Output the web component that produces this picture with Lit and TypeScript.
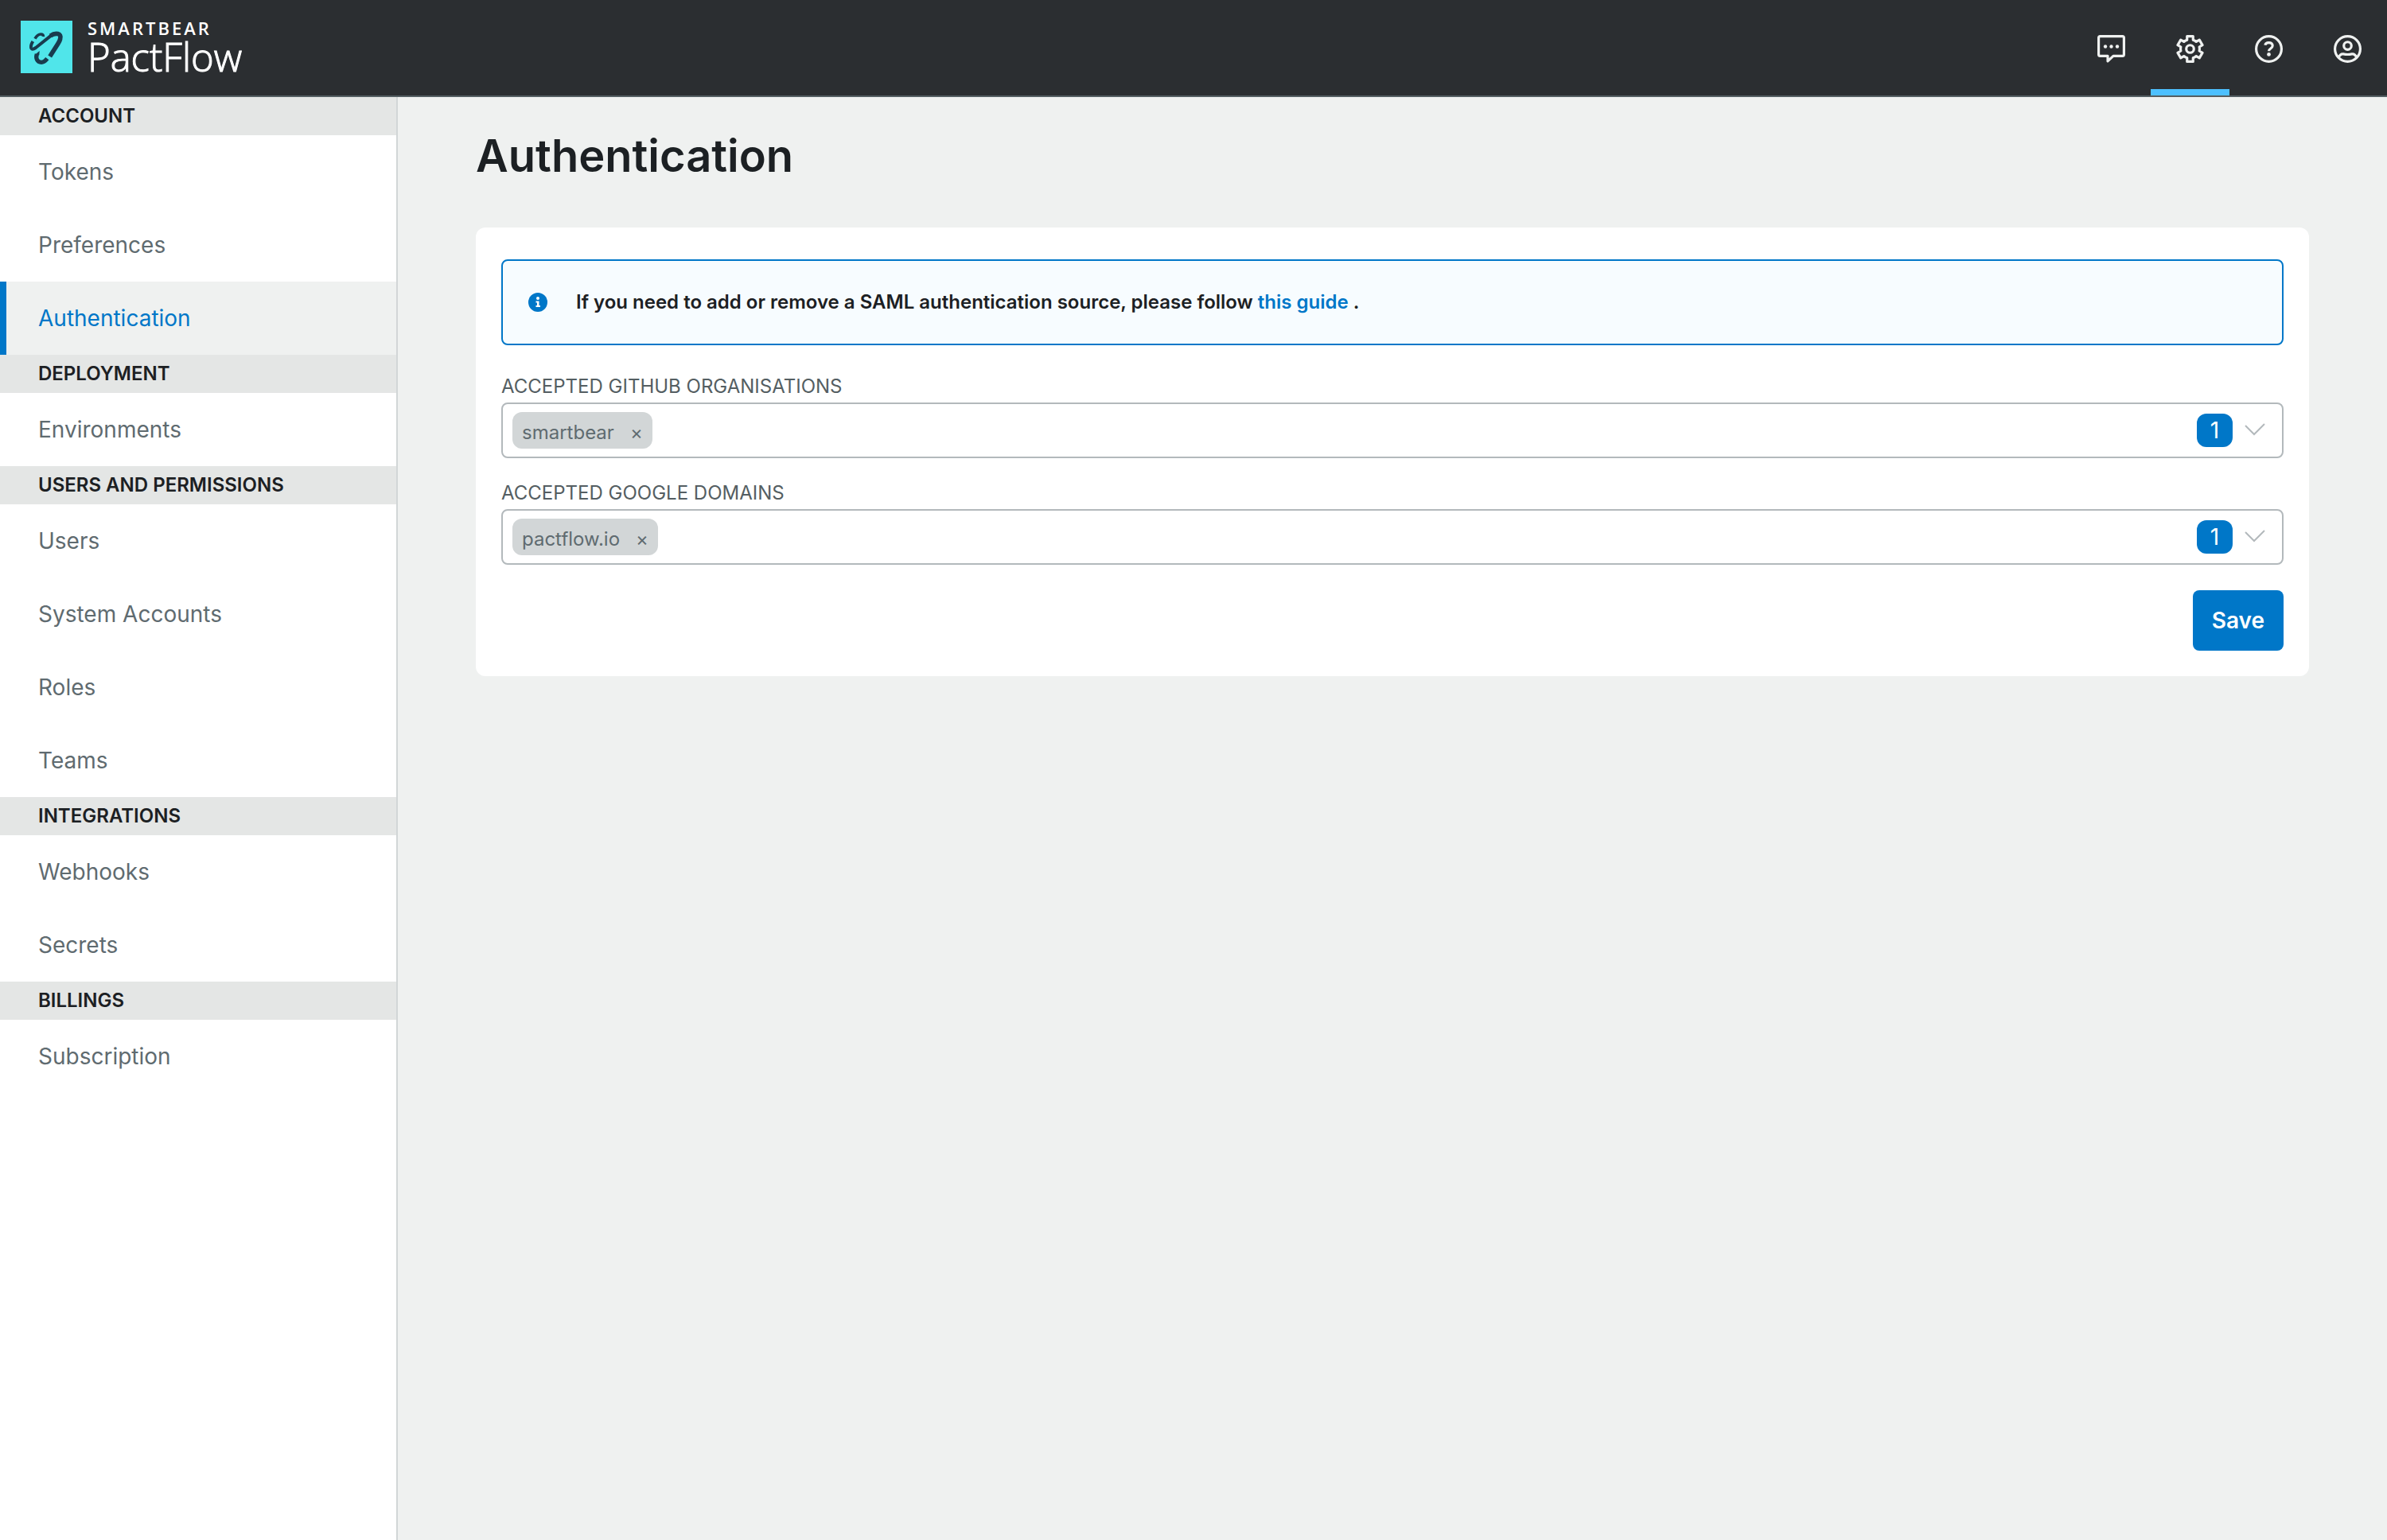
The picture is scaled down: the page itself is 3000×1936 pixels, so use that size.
import { LitElement, html, css, svg } from "lit";
import { customElement, property, state } from "lit/decorators.js";
import { classMap } from "lit/directives/class-map.js";

interface NavSection {
  title: string;
  items: string[];
}

const SECTIONS: NavSection[] = [
  { title: "Account", items: ["Tokens", "Preferences", "Authentication"] },
  { title: "Deployment", items: ["Environments"] },
  { title: "Users and permissions", items: ["Users", "System Accounts", "Roles", "Teams"] },
  { title: "Integrations", items: ["Webhooks", "Secrets"] },
  { title: "Billings", items: ["Subscription"] },
];

const ICONS = {
  feedback: svg`
    <path d="M4 2h28a2 2 0 0 1 2 2v21a2 2 0 0 1-2 2H20.500L13.500 33.500V27H4a2 2 0 0 1-2-2v-21a2 2 0 0 1 2-2z" />
    <g fill="currentColor" stroke="none">
      <circle cx="10.500" cy="15" r="2.200" /><circle cx="18" cy="15" r="2.200" /><circle cx="25.500" cy="15" r="2.200" />
    </g>`,
  settings: svg`
    <path d="M14.200 2h7.600v4.600a12 12 0 0 1 4 2.300l4-2.300 3.800 6.500-3.900 2.400a12 12 0 0 1 0 5l3.900 2.400-3.800 6.500-4-2.300a12 12 0 0 1-4 2.300V34h-7.600v-4.600a12 12 0 0 1-4-2.300l-4 2.300-3.800-6.500 3.900-2.400a12 12 0 0 1 0-5l-3.900-2.400 3.800-6.500 4 2.300a12 12 0 0 1 4-2.300z" />
    <circle cx="18" cy="18" r="4.800" />`,
  help: svg`
    <circle cx="18" cy="18" r="16" />
    <path d="M13.300 13.200q.5-3.200 4.500-3.200c3.100 0 4.900 1.500 4.900 4 0 3.700-4.700 3.200-4.700 6.800" />
    <circle cx="18" cy="25" r="2.400" fill="currentColor" stroke="none" />`,
  profile: svg`
    <circle cx="18" cy="18" r="16" />
    <circle cx="18" cy="14" r="4.800" />
    <path d="M6.500 29q2-5 6-4.600q5.500 1.300 11 0q4-.4 6 4.600" />`,
};

@customElement("top-bar")
class TopBar extends LitElement {
  static styles = css`
    :host { display: block; }
    .bar {
      display: flex;
      justify-content: space-between;
      height: 120px;
      background: #2b2e31;
      border-bottom: 2px solid #545e62;
    }
    .brand {
      display: flex;
      align-items: center;
      gap: 19px;
      padding: 0 0 2px 26px;
      color: #fff;
      text-decoration: none;
      font-family: "Open Sans", sans-serif;
    }
    .mark { width: 65px; height: 66px; display: block; }
    .names { display: flex; flex-direction: column; }
    .company { font-size: 22px; line-height: 24px; font-weight: 600; letter-spacing: 3px; }
    .product { font-size: 49px; line-height: 48px; font-weight: 300; -webkit-text-stroke: 1px #fff; }
    .actions { display: flex; }
    .action {
      display: flex;
      align-items: center;
      justify-content: center;
      width: 99px;
      padding: 11px 0 0;
      border: 0;
      border-bottom: 8px solid transparent;
      background: none;
      color: #eff1f0;
      cursor: pointer;
    }
    .current { border-bottom-color: #4dc0ff; }
    .icon {
      width: 35px;
      height: 35px;
      fill: none;
      stroke: currentColor;
      stroke-width: 3.2;
      stroke-linejoin: round;
    }
  `;

  render() {
    const actions = [
      { label: "Feedback", icon: ICONS.feedback },
      { label: "Settings", icon: ICONS.settings, current: true },
      { label: "Help", icon: ICONS.help },
      { label: "Profile", icon: ICONS.profile },
    ];
    return html`
      <header class="bar">
        <a class="brand" href="#home">
          <svg class="mark" viewBox="0 0 195 198" aria-hidden="true">
            <rect width="195" height="198" fill="#50e5ea" />
            <g fill="none" stroke="#193b4e">
              <path d="M46 78Q37 93 39 102Q42 112 57 102L112 58Q124 48 134 48" stroke-width="12" />
              <path d="M112 57C132 43 155 48 149 68Q148 74 140 88L110 135" stroke-width="17" />
              <path d="M54 68Q63 51 76 51Q86 51 85 60" stroke-width="11" />
              <path d="M61 126C56 142 62 157 78 157Q89 157 100 143" stroke-width="16" />
              <path d="M54 128L71 114L70 130z" fill="#193b4e" stroke="none" />
            </g>
          </svg>
          <span class="names">
            <span class="company">SMARTBEAR</span>
            <span class="product">PactFlow</span>
          </span>
        </a>
        <nav class="actions">
          ${actions.map(
            (a) => html`
              <button class=${classMap({ action: true, current: !!a.current })} aria-label=${a.label}>
                <svg class="icon" viewBox="0.4 0.4 35.2 35.2" aria-hidden="true">${a.icon}</svg>
              </button>`
          )}
        </nav>
      </header>`;
  }
}

@customElement("side-nav")
class SideNav extends LitElement {
  @property() current = "";

  static styles = css`
    :host {
      display: block;
      background: #fff;
      border-right: 2px solid #d2d6d7;
    }
    .heading {
      margin: 0;
      padding: 0 48px;
      background: #e4e6e5;
      color: #1c2023;
      font-size: 24px;
      line-height: 48px;
      font-weight: 600;
      text-transform: uppercase;
    }
    .list { margin: 0; padding: 0; list-style: none; }
    .link {
      display: block;
      padding: 0 40px;
      border-left: 8px solid transparent;
      color: #5f6b70;
      font-size: 28px;
      line-height: 92px;
      text-decoration: none;
    }
    .current { background: #eff1f0; border-left-color: #0077c8; color: #0077c8; }
  `;

  render() {
    return html`
      <nav>
        ${SECTIONS.map(
          (s) => html`
            <h2 class="heading">${s.title}</h2>
            <ul class="list">
              ${s.items.map(
                (item) => html`
                  <li>
                    <a
                      class=${classMap({ link: true, current: item === this.current })}
                      href="#${item.toLowerCase().replace(" ", "-")}"
                    >${item}</a>
                  </li>`
              )}
            </ul>`
        )}
      </nav>`;
  }
}

@customElement("tag-field")
class TagField extends LitElement {
  @property() label = "";
  @property({ type: Array }) values: string[] = [];

  static styles = css`
    :host { display: block; }
    .label {
      display: block;
      padding-top: 2px;
      color: #545e62;
      font-size: 24px;
      line-height: 40px;
      text-transform: uppercase;
    }
    .box {
      display: flex;
      align-items: center;
      gap: 12px;
      box-sizing: border-box;
      height: 70px;
      padding: 0 18px 0 12px;
      border: 2px solid #b3b9bc;
      border-radius: 8px;
    }
    .tag {
      display: flex;
      align-items: center;
      gap: 12px;
      box-sizing: border-box;
      height: 46px;
      padding: 4px 4px 0 12px;
      border-radius: 12px;
      background: #d2d6d7;
      color: #5f6b70;
      font-size: 24px;
    }
    .remove {
      width: 32px;
      padding: 0;
      border: 0;
      background: none;
      color: inherit;
      font: inherit;
      cursor: pointer;
    }
    .entry {
      flex: 1;
      min-width: 0;
      border: 0;
      outline: 0;
      background: none;
      font: inherit;
      font-size: 24px;
    }
    .count {
      min-width: 45px;
      border-radius: 12px;
      background: #0077c8;
      color: #fff;
      font-size: 28px;
      line-height: 42px;
      text-align: center;
    }
    .toggle { padding: 0; border: 0; background: none; color: #b3b9bc; cursor: pointer; }
    .chevron { display: block; width: 32px; height: 20px; fill: none; stroke: currentColor; stroke-width: 2; }
  `;

  render() {
    return html`
      <label class="label" for="entry">${this.label}</label>
      <div class="box">
        ${this.values.map(
          (v) => html`
            <span class="tag">${v}<button class="remove" type="button" aria-label="Remove ${v}" @click=${() => this.remove(v)}>×</button></span>`
        )}
        <input class="entry" id="entry" type="text" />
        <span class="count">${this.values.length}</span>
        <button class="toggle" type="button" aria-label="Show options">
          <svg class="chevron" viewBox="0 0 32 20" aria-hidden="true"><path d="M4 4L15 15L28 2" /></svg>
        </button>
      </div>`;
  }

  private remove(value: string) {
    this.values = this.values.filter((v) => v !== value);
  }
}

@customElement("app-root")
class AppRoot extends LitElement {
  @state() private page = "Authentication";

  static styles = css`
    :host {
      display: flex;
      flex-direction: column;
      min-height: 100vh;
      background: #eff1f0;
      color: #1c2023;
      font-family: Inter, sans-serif;
    }
    .body { display: flex; flex: 1; }
    .side { flex: 0 0 498px; }
    .main { flex: 1; min-width: 0; padding: 40px 98px; }
    .title { margin: 0 0 56px; font-size: 56px; line-height: 68px; font-weight: 600; }
    .card { padding: 40px 32px 32px; border-radius: 12px; background: #fff; }
    .notice {
      display: flex;
      align-items: center;
      gap: 36px;
      margin-bottom: 30px;
      padding: 36px 32px;
      border: 2px solid #0077c8;
      border-radius: 8px;
      background: #f7fcff;
      font-size: 24px;
      line-height: 32px;
      font-weight: 600;
    }
    .info { width: 24px; height: 24px; flex: none; }
    .text { margin: 0; }
    .guide { color: #0077c8; text-decoration: none; }
    .fields { display: flex; flex-direction: column; gap: 22px; }
    .footer { display: flex; justify-content: flex-end; margin-top: 32px; }
    .save {
      padding: 0 24px;
      border: 0;
      border-radius: 8px;
      background: #0077c8;
      color: #fff;
      font: inherit;
      font-size: 28px;
      line-height: 76px;
      font-weight: 600;
      cursor: pointer;
    }
  `;

  render() {
    return html`
      <top-bar></top-bar>
      <div class="body">
        <side-nav class="side" .current=${this.page}></side-nav>
        <main class="main">
          <h1 class="title">${this.page}</h1>
          <form class="card" @submit=${(e: Event) => e.preventDefault()}>
            <div class="notice">
              <svg class="info" viewBox="0 0 24 24" aria-hidden="true">
                <circle cx="12" cy="12" r="12" fill="#0077c8" />
                <g fill="#fff">
                  <circle cx="12" cy="7" r="2" />
                  <path d="M9.500 10.500H13.500V16H15V18H9.500V16H11V12.500H9.500z" />
                </g>
              </svg>
              <p class="text">
                If you need to add or remove a SAML authentication source, please follow
                <a class="guide" href="#guide">this guide</a> .
              </p>
            </div>
            <div class="fields">
              <tag-field label="Accepted GitHub organisations" .values=${["smartbear"]}></tag-field>
              <tag-field label="Accepted Google domains" .values=${["pactflow.io"]}></tag-field>
            </div>
            <div class="footer"><button class="save" type="submit">Save</button></div>
          </form>
        </main>
      </div>`;
  }
}
